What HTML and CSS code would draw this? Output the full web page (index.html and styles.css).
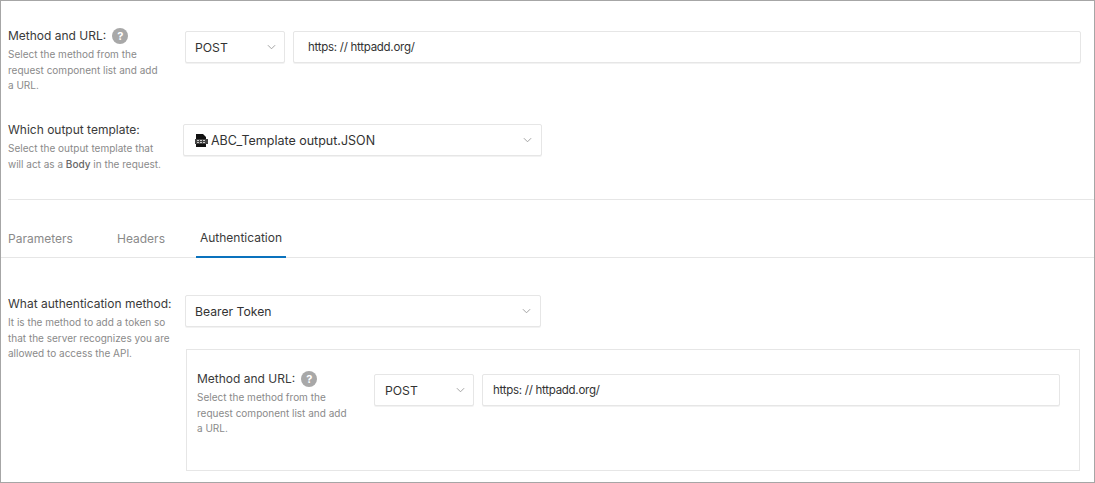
FILE: index.html
```html
<!DOCTYPE html>
<html lang="en">
<head>
<meta charset="utf-8">
<title>Request settings</title>
<link rel="stylesheet" href="styles.css">
</head>
<body>
<main class="frame">
  <section class="request">
    <div class="row row-method">
      <div class="label label-method">
        <h3 class="title">Method and URL: <span class="help">?</span></h3>
        <p class="hint hint-narrow">Select the method from the request component list and add a URL.</p>
      </div>
      <div class="control control-method">
        <svg class="chev" viewBox="0 0 10 6"><path d="M1 1l4 4 4-4"/></svg>
        <span>POST</span>
      </div>
      <div class="control control-url"><span>https: // httpadd.org/</span></div>
    </div>
    <div class="row row-template">
      <div class="label label-template">
        <h3 class="title">Which output template:</h3>
        <p class="hint hint-template">Select the output template that will act as a <b class="hint-strong">Body</b> in the request.</p>
      </div>
      <div class="control control-template">
        <svg class="file" viewBox="0 0 13 13"><path d="M1 0h7l3 3v2H1z"/><rect x="0" y="5" width="13" height="5" fill="#444"/><path d="M1 10h10v3H1z"/><path d="M2 6.5h9M2 8.5h9" stroke="#ccc" stroke-width="1" stroke-dasharray="2 1"/></svg>
        <span>ABC_Template output.JSON</span>
        <svg class="chev chev-end" viewBox="0 0 10 6"><path d="M1 1l4 4 4-4"/></svg>
      </div>
    </div>
  </section>
  <nav class="tabs">
    <span class="tab tab-params">Parameters</span>
    <span class="tab tab-headers">Headers</span>
    <span class="tab tab-active">Authentication</span>
  </nav>
  <section class="auth">
    <div class="label label-auth">
      <h3 class="title">What authentication method:</h3>
      <p class="hint">It is the method to add a token so that the server recognizes you are allowed to access the API.</p>
    </div>
    <div class="auth-main">
      <div class="control control-bearer">
        <span>Bearer Token</span>
        <svg class="chev chev-end" viewBox="0 0 10 6"><path d="M1 1l4 4 4-4"/></svg>
      </div>
      <div class="box">
        <div class="row">
          <div class="label label-nested">
            <h3 class="title">Method and URL: <span class="help">?</span></h3>
            <p class="hint hint-narrow">Select the method from the request component list and add a URL.</p>
          </div>
          <div class="control control-method control-method-nested">
            <svg class="chev" viewBox="0 0 10 6"><path d="M1 1l4 4 4-4"/></svg>
            <span>POST</span>
          </div>
          <div class="control control-url-nested"><span>https: // httpadd.org/</span></div>
        </div>
      </div>
    </div>
  </section>
</main>
</body>
</html>
```
FILE: styles.css
```css
* { box-sizing: border-box; }
html, body { margin: 0; padding: 0; background: #fff; }
body { font-family: Inter, "Liberation Sans", sans-serif; color: #333; overflow: hidden; }
.frame { width: 1095px; height: 483px; border: 1px solid #a6a6a6; overflow: hidden; display: flex; flex-direction: column; }
.request { height: 199px; padding-top: 25px; margin-left: 7px; border-bottom: 1px solid #e6e6e6; display: flex; flex-direction: column; }
.row { display: flex; align-items: flex-start; }
.row-method { margin-bottom: 27px; height: 67px; }
.label { flex: none; }
.label-method { width: 177px; }
.label-template { width: 175px; }
.label-auth { width: 177px; margin-left: 7px; margin-top: -1px; }
.label-nested { width: 177px; margin-top: -5px; }
.title { margin: 0; font-size: 12px; line-height: 20px; font-weight: 400; color: #3a3a3a; display: flex; align-items: center; gap: 6px; white-space: nowrap; }
.hint { margin: 1px 0 0; font-size: 10px; line-height: 15.5px; color: #8a8a8a; width: 165px; }
.hint-narrow { width: 155px; }
.hint-template { width: 158px; }
.hint-strong { font-weight: 500; color: #666; }
.help { width: 16px; height: 16px; border-radius: 50%; background: #a8a8a8; color: #fff; font-size: 11px; font-weight: 700; line-height: 16px; text-align: center; flex: none; margin-top: -1px; }
.control { height: 32px; border: 1px solid #e6e6e6; border-radius: 2px; display: flex; align-items: center; font-size: 12.2px; color: #333; background: #fff; flex: none; box-shadow: 0 1px 0 #f2f2f2; }
.row-method .control { margin-top: 5px; }
.control-method { width: 100px; padding: 0 8px 0 9px; flex-direction: row-reverse; justify-content: space-between; margin-right: 8px; }
.control-method-nested { padding-left: 10px; }
.control-url { width: 788px; padding-left: 14px; font-size: 11.5px; letter-spacing: -0.27px; }
.control-url-nested { width: 578px; padding-left: 10px; font-size: 11.5px; letter-spacing: -0.27px; }
.control-template { width: 359px; padding: 0 9px 0 11px; font-size: 12.5px; margin-top: 4px; }
.control-template span { flex: 1; margin-left: 3px; }
.control-bearer { width: 356px; padding: 0 9px; justify-content: space-between; }
.chev { width: 9px; height: 6px; flex: none; fill: none; stroke: #999; stroke-width: 1; }
.file { width: 13px; height: 13px; flex: none; fill: #111; }
.tabs { height: 58px; display: flex; align-items: stretch; border-bottom: 1px solid #e6e6e6; font-size: 12px; flex: none; }
.tab { display: flex; align-items: center; padding-top: 18px; color: #8a8a8a; height: 58px; }
.tab-params { margin-left: 7px; width: 109px; }
.tab-headers { width: 79px; }
.tab-active { color: #3a3a3a; width: 90px; justify-content: center; border-bottom: 2px solid #0a72bd; }
.auth { display: flex; padding-top: 37px; flex: 1; min-height: 0; }
.auth-main { flex: 1; display: flex; flex-direction: column; }
.box { width: 894px; height: 122px; margin-top: 22px; margin-left: 1px; border: 1px solid #e6e6e6; padding: 24px 0 0 10px; }
```
